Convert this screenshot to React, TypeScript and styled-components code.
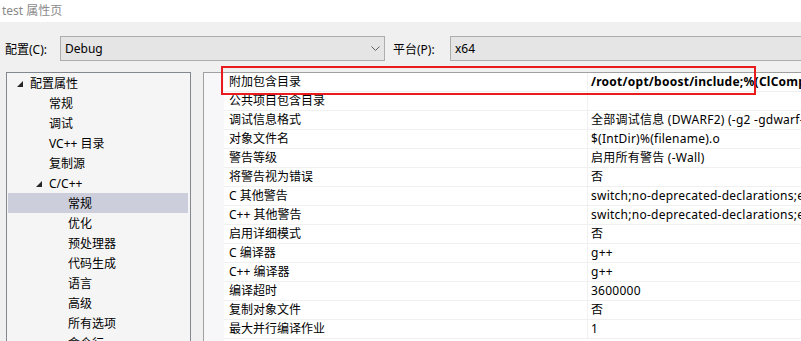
import styled, { createGlobalStyle } from "styled-components";

const GlobalStyle = createGlobalStyle`
  body {
    margin: 0;
    font-family: "Noto Sans", "Noto Sans CJK SC", sans-serif;
    font-size: 12px;
    color: #000;
  }
`;

interface TreeItem {
  label: string;
  level: number;
  expanded?: boolean;
  selected?: boolean;
}

interface PropRow {
  name: string;
  value: string;
  bold?: boolean;
}

const treeItems: TreeItem[] = [
  { label: "配置属性", level: 0, expanded: true },
  { label: "常规", level: 1 },
  { label: "调试", level: 1 },
  { label: "VC++ 目录", level: 1 },
  { label: "复制源", level: 1 },
  { label: "C/C++", level: 1, expanded: true },
  { label: "常规", level: 2, selected: true },
  { label: "优化", level: 2 },
  { label: "预处理器", level: 2 },
  { label: "代码生成", level: 2 },
  { label: "语言", level: 2 },
  { label: "高级", level: 2 },
  { label: "所有选项", level: 2 },
  { label: "命令行", level: 2 },
];

const propRows: PropRow[] = [
  { name: "附加包含目录", value: "/root/opt/boost/include;%(ClCompile.AdditionalIncludeDirectories)", bold: true },
  { name: "公共项目包含目录", value: "" },
  { name: "调试信息格式", value: "全部调试信息 (DWARF2) (-g2 -gdwarf-2)" },
  { name: "对象文件名", value: "$(IntDir)%(filename).o" },
  { name: "警告等级", value: "启用所有警告 (-Wall)" },
  { name: "将警告视为错误", value: "否" },
  { name: "C 其他警告", value: "switch;no-deprecated-declarations;empty-body" },
  { name: "C++ 其他警告", value: "switch;no-deprecated-declarations;empty-body" },
  { name: "启用详细模式", value: "否" },
  { name: "C 编译器", value: "g++" },
  { name: "C++ 编译器", value: "g++" },
  { name: "编译超时", value: "3600000" },
  { name: "复制对象文件", value: "否" },
  { name: "最大并行编译作业", value: "1" },
];

const Expander = () => (
  <svg width="6" height="6" viewBox="0 0 6 6">
    <polygon points="6,0 6,6 0,6" fill="#262626" />
  </svg>
);

const Chevron = () => (
  <svg width="9" height="5" viewBox="0 0 9 5">
    <polyline points="0.5,0.5 4.5,4.5 8.5,0.5" fill="none" stroke="#606060" strokeWidth="1" />
  </svg>
);

export default function App() {
  return (
    <Window>
      <GlobalStyle />
      <TitleBar>test 属性页</TitleBar>
      <ConfigBar>
        <FieldLabel $width={55}>配置(C):</FieldLabel>
        <Combo $width={325}>
          Debug
          <ComboArrow>
            <Chevron />
          </ComboArrow>
        </Combo>
        <FieldLabel $width={57} $indent={8}>平台(P):</FieldLabel>
        <Combo $width={360}>x64</Combo>
      </ConfigBar>
      <Content>
        <TreePanel>
          {treeItems.map((item, i) => (
            <TreeRow key={i} $level={item.level} $selected={item.selected}>
              <ExpanderSlot>{item.expanded && <Expander />}</ExpanderSlot>
              {item.label}
            </TreeRow>
          ))}
        </TreePanel>
        <GridPanel>
          <Gutter />
          <Table>
            {propRows.map((row, i) => (
              <GridRow key={i}>
                <NameCell>{row.name}</NameCell>
                <ValueCell $bold={row.bold}>{row.value}</ValueCell>
              </GridRow>
            ))}
          </Table>
          <Highlight />
        </GridPanel>
      </Content>
    </Window>
  );
}

// Styles
const Window = styled.div`
  width: 801px;
  height: 341px;
  overflow: hidden;
  background: #f0f0f0;
  display: flex;
  flex-direction: column;
`;

const TitleBar = styled.div`
  height: 22px;
  line-height: 22px;
  padding-left: 2px;
  background: #fff;
  color: #8a8a8a;
  font-size: 12px;
`;

const ConfigBar = styled.div`
  display: flex;
  align-items: center;
  margin-top: 14px;
  height: 25px;
  padding-left: 5px;
`;

const FieldLabel = styled.div<{ $width: number; $indent?: number }>`
  width: ${(p) => p.$width}px;
  margin-left: ${(p) => p.$indent ?? 0}px;
  flex-shrink: 0;
  white-space: nowrap;
`;

const Combo = styled.div<{ $width: number }>`
  position: relative;
  width: ${(p) => p.$width}px;
  height: 25px;
  box-sizing: border-box;
  flex-shrink: 0;
  border: 1px solid #adadad;
  background: #e5e5e5;
  padding-left: 4px;
  line-height: 23px;
`;

const ComboArrow = styled.span`
  position: absolute;
  right: 4px;
  top: 9px;
  display: flex;
`;

const Content = styled.div`
  display: flex;
  gap: 12px;
  margin-top: 11px;
  padding-left: 6px;
  flex: 1;
  min-height: 0;
`;

const TreePanel = styled.div`
  width: 185px;
  box-sizing: border-box;
  border: 1px solid #828790;
  border-bottom: none;
  background: #f5f5f5;
  padding-left: 1px;
  overflow: hidden;
`;

const TreeRow = styled.div<{ $level: number; $selected?: boolean }>`
  display: flex;
  align-items: center;
  height: 20px;
  width: 180px;
  padding-left: ${(p) => 8 + p.$level * 19}px;
  box-sizing: border-box;
  background: ${(p) => (p.$selected ? "#cccedb" : "transparent")};
  white-space: nowrap;
`;

const ExpanderSlot = styled.span`
  display: flex;
  align-items: center;
  width: 13px;
  flex-shrink: 0;
  margin-left: 1px;
  margin-top: 1px;
`;

const GridPanel = styled.div`
  position: relative;
  flex: 1;
  display: flex;
  border-left: 1px solid #a0a0a0;
  border-top: 1px solid #a0a0a0;
  background: #fff;
  min-width: 0;
`;

const Gutter = styled.div`
  width: 20px;
  flex-shrink: 0;
  background: #f7f7f9;
`;

const Table = styled.div`
  flex: 1;
  min-width: 0;
  overflow: hidden;
`;

const GridRow = styled.div`
  display: flex;
  height: 19px;
  box-sizing: border-box;
  border-bottom: 1px solid #f0f0f0;
  white-space: nowrap;
`;

const NameCell = styled.div`
  width: 364px;
  flex-shrink: 0;
  padding-left: 5px;
  line-height: 18px;
  box-sizing: border-box;
  border-right: 1px solid #f0f0f0;
`;

const ValueCell = styled.div<{ $bold?: boolean }>`
  padding-left: 3px;
  line-height: 18px;
  letter-spacing: 0.25px;
  font-weight: ${(p) => (p.$bold ? 700 : 400)};
  overflow: hidden;
`;

const Highlight = styled.div`
  position: absolute;
  left: 17px;
  top: -7px;
  width: 535px;
  height: 29px;
  box-sizing: border-box;
  border: 2px solid #e81c1c;
  pointer-events: none;
`;
